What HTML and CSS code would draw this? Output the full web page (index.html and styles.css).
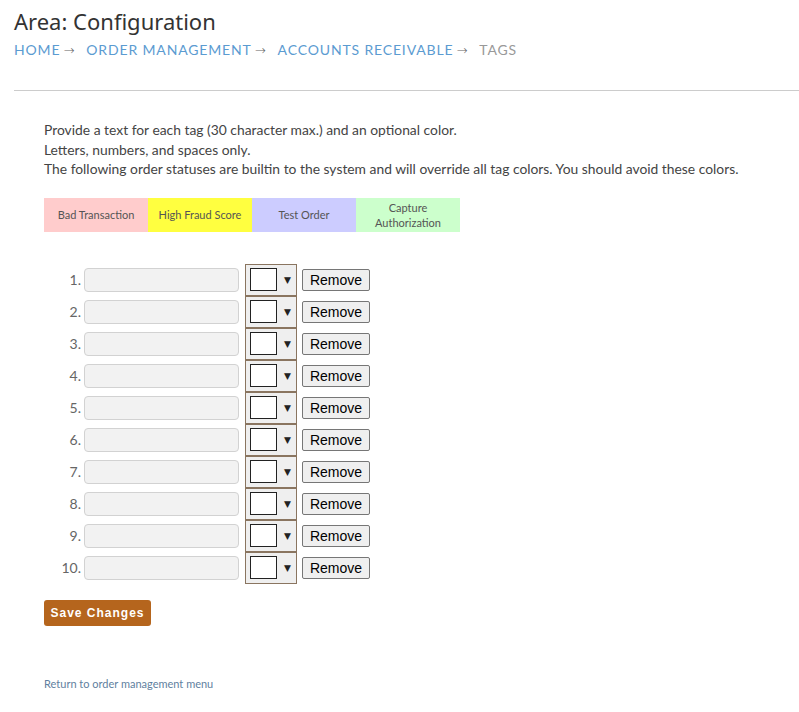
FILE: index.html
```html
<!DOCTYPE html>
<html lang="en">
<head>
    <meta charset="UTF-8">
    <title>Area: Configuration - Tags</title>
    <link rel="stylesheet" href="styles.css">
</head>
<body>
    <div class="header">
        <h1 class="area-title">Area: Configuration</h1>
        <div class="crumbs">
            <a href="#">Home</a>
            <span class="sep">&rarr;</span>
            <a href="#">Order Management</a>
            <span class="sep">&rarr;</span>
            <a href="#">Accounts Receivable</a>
            <span class="sep">&rarr;</span>
            <span class="current">Tags</span>
        </div>
    </div>

    <div class="content">
        <p class="intro">
            Provide a text for each tag (30 character max.) and an optional color.<br>
            Letters, numbers, and spaces only.<br>
            The following order statuses are builtin to the system and will override all tag colors. You should avoid these colors.
        </p>

        <div class="builtin">
            <div class="status bad">Bad Transaction</div>
            <div class="status fraud">High Fraud Score</div>
            <div class="status test">Test Order</div>
            <div class="status capture">Capture<br>Authorization</div>
        </div>

        <form class="tag-form" onsubmit="return false">
            <ol class="tag-list">
                <li class="tag-row"><span class="num">1.</span><input class="tag-text" type="text"><div class="color-pick"><span class="swatch"></span><span class="arrow">&#9660;</span></div><button class="remove" type="button">Remove</button></li>
                <li class="tag-row"><span class="num">2.</span><input class="tag-text" type="text"><div class="color-pick"><span class="swatch"></span><span class="arrow">&#9660;</span></div><button class="remove" type="button">Remove</button></li>
                <li class="tag-row"><span class="num">3.</span><input class="tag-text" type="text"><div class="color-pick"><span class="swatch"></span><span class="arrow">&#9660;</span></div><button class="remove" type="button">Remove</button></li>
                <li class="tag-row"><span class="num">4.</span><input class="tag-text" type="text"><div class="color-pick"><span class="swatch"></span><span class="arrow">&#9660;</span></div><button class="remove" type="button">Remove</button></li>
                <li class="tag-row"><span class="num">5.</span><input class="tag-text" type="text"><div class="color-pick"><span class="swatch"></span><span class="arrow">&#9660;</span></div><button class="remove" type="button">Remove</button></li>
                <li class="tag-row"><span class="num">6.</span><input class="tag-text" type="text"><div class="color-pick"><span class="swatch"></span><span class="arrow">&#9660;</span></div><button class="remove" type="button">Remove</button></li>
                <li class="tag-row"><span class="num">7.</span><input class="tag-text" type="text"><div class="color-pick"><span class="swatch"></span><span class="arrow">&#9660;</span></div><button class="remove" type="button">Remove</button></li>
                <li class="tag-row"><span class="num">8.</span><input class="tag-text" type="text"><div class="color-pick"><span class="swatch"></span><span class="arrow">&#9660;</span></div><button class="remove" type="button">Remove</button></li>
                <li class="tag-row"><span class="num">9.</span><input class="tag-text" type="text"><div class="color-pick"><span class="swatch"></span><span class="arrow">&#9660;</span></div><button class="remove" type="button">Remove</button></li>
                <li class="tag-row"><span class="num">10.</span><input class="tag-text" type="text"><div class="color-pick"><span class="swatch"></span><span class="arrow">&#9660;</span></div><button class="remove" type="button">Remove</button></li>
            </ol>
            <button class="save-btn" type="submit">Save Changes</button>
        </form>

        <a class="back-link" href="#">Return to order management menu</a>
    </div>
</body>
</html>
```

FILE: styles.css
```css
* {
    margin: 0;
    padding: 0;
    box-sizing: border-box;
}

body {
    font-family: Lato, 'Liberation Sans', Arial, sans-serif;
    color: #444;
    background: #fff;
}

a {
    text-decoration: none;
}

.header {
    padding: 7px 0 0 14px;
}

.area-title {
    font-family: 'Noto Sans', 'Open Sans', sans-serif;
    font-weight: normal;
    font-size: 22px;
    line-height: 28px;
    color: #333;
}

.crumbs {
    display: flex;
    align-items: baseline;
    margin-top: 6px;
    font-size: 14px;
    line-height: 18px;
    text-transform: uppercase;
    letter-spacing: 0.85px;
    color: #7a7a7a;
    padding-bottom: 30px;
    border-bottom: 1px solid #ccc;
}

.crumbs a {
    color: #5b9bd1;
}

.crumbs .sep {
    font-family: 'DejaVu Sans', sans-serif;
    font-weight: 200;
    font-size: 13px;
    letter-spacing: 0;
    color: #666;
    margin: 0 12px 0 3px;
}

.crumbs .current {
    color: #999;
}

.content {
    padding: 29px 0 0 44px;
}

.intro {
    font-size: 13.85px;
    line-height: 19.5px;
    color: #444;
}

.builtin {
    display: flex;
    margin-top: 19px;
}

.status {
    width: 104px;
    height: 34px;
    display: flex;
    align-items: center;
    justify-content: center;
    text-align: center;
    font-size: 11px;
    line-height: 15px;
    color: #555;
}

.bad { background: #ffcccc; }
.fraud { background: #ffff40; }
.test { background: #ccccff; }
.capture { background: #ccffcc; }

.tag-list {
    list-style: none;
    margin-top: 32px;
}

.tag-row {
    display: flex;
    align-items: center;
    height: 32px;
}

.num {
    width: 37px;
    text-align: right;
    font-size: 14px;
    color: #666;
}

.tag-text {
    width: 155px;
    height: 24px;
    margin-left: 3px;
    background: #f2f2f2;
    border: 1px solid #d2d2d2;
    border-radius: 4px;
}

.color-pick {
    width: 52px;
    height: 32px;
    margin-left: 6px;
    border: 1px solid #8a7560;
    background: #efefef;
    display: flex;
    align-items: center;
    padding-left: 4px;
}

.swatch {
    width: 27px;
    height: 23px;
    border: 1px solid #222;
    background: #fff;
}

.arrow {
    font-family: 'DejaVu Sans', sans-serif;
    font-size: 9px;
    color: #222;
    margin-left: 7px;
}

.remove {
    font-family: 'Liberation Sans', Arial, sans-serif;
    font-size: 14px;
    color: #000;
    width: 68px;
    height: 22px;
    margin-left: 5px;
    background: #efefef;
    border: 1px solid #767676;
    border-radius: 2px;
}

.save-btn {
    margin-top: 16px;
    width: 107px;
    height: 26px;
    background: #b5651d;
    color: #fff;
    border: none;
    border-radius: 3px;
    font-family: 'Liberation Sans', Arial, sans-serif;
    font-size: 12px;
    font-weight: bold;
    letter-spacing: 1px;
}

.back-link {
    display: block;
    margin-top: 51px;
    font-size: 11px;
    color: #5f7fa0;
}
```
